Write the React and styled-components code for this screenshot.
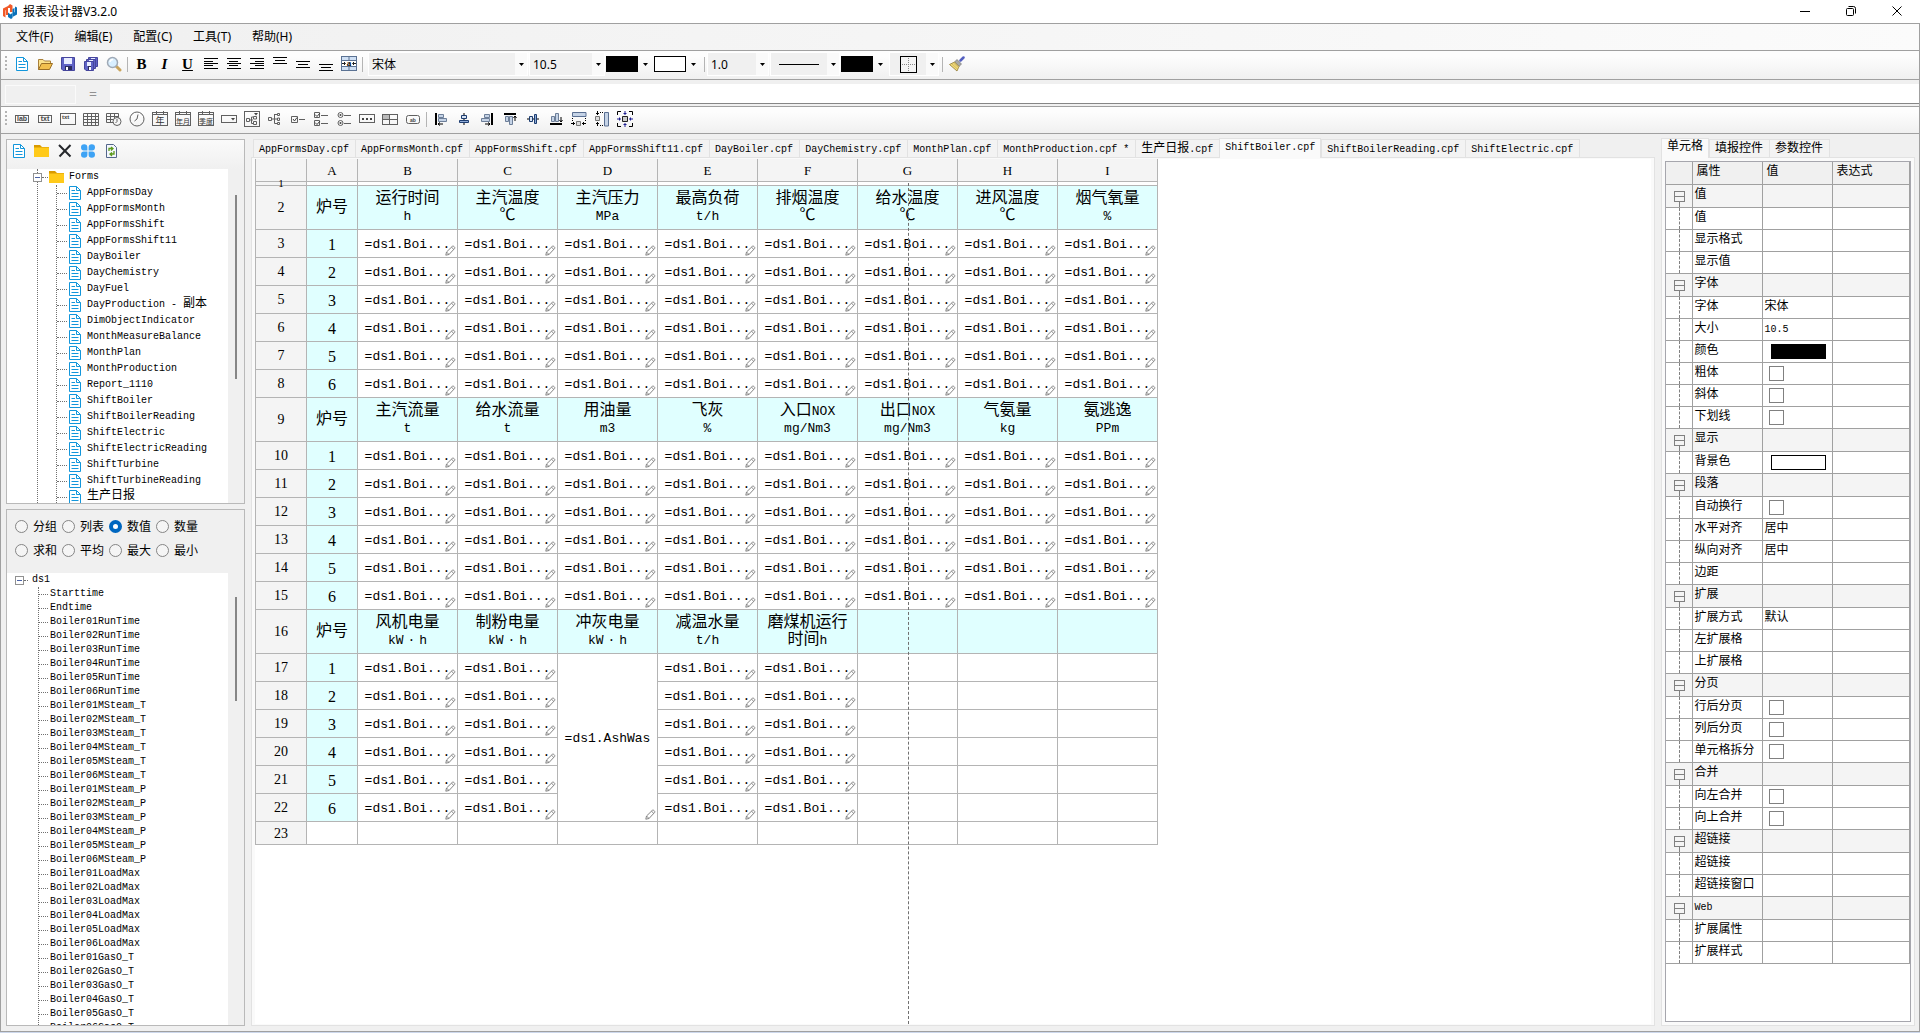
import { useState } from 'react'
import styled, { createGlobalStyle, css } from 'styled-components'

const GlobalStyle = createGlobalStyle`
  * {
    box-sizing: border-box;
  }

  body {
    margin: 0;
    background: #f0f0f0;
    color: #000;
    font-family: 'Noto Sans', 'Noto Sans CJK SC', sans-serif;
    font-size: 12px;
  }

  button, input, select {
    font: inherit;
    color: inherit;
  }

  button {
    background: none;
    border: 0;
    padding: 0;
  }
`

const mono = css`
  font-family: 'Liberation Mono', 'Noto Sans CJK SC', monospace;
  font-size: 10px;
`

const Window = styled.div`
  height: 100vh;
  display: flex;
  flex-direction: column;
  overflow: hidden;
  border-bottom: 1px solid #cdd8ec;
`

const TitleBar = styled.header`
  height: 23px;
  flex: none;
  display: flex;
  align-items: center;
  background: #fff;
  padding: 0 0 2px 2px;
`

const AppTitle = styled.h1`
  flex: 1;
  margin: 0 0 0 5px;
  font-size: 12px;
  font-weight: normal;
`

const WindowButton = styled.button`
  width: 46px;
  height: 20px;
  display: grid;
  place-items: center;
`

const Frame = styled.div`
  flex: 1;
  min-height: 0;
  display: flex;
  flex-direction: column;
  border: 1px solid #a0a0a0;
`

const MenuBar = styled.nav`
  height: 27px;
  flex: none;
  display: flex;
  align-items: center;
  gap: 21px;
  padding: 0 0 2px 15px;
  background: linear-gradient(90deg, #f0f0f0, #fbfbfb);
  border-bottom: 1px solid #a0a0a0;
`

const ToolBar = styled.div`
  height: ${(props) => props.$height}px;
  flex: none;
  display: flex;
  align-items: center;
  padding: 0 0 2px 4px;
  background: linear-gradient(#fdfdfd 20%, #f0f0f0);
  border-bottom: 1px solid #a0a0a0;
`

const Grip = styled.span`
  width: 2px;
  height: 16px;
  margin-right: 3px;
  background: repeating-linear-gradient(#b4b4b4 0 2px, transparent 2px 4px);
`

const ToolButton = styled.button`
  width: 23px;
  height: 23px;
  display: grid;
  place-items: center;
`

const Letter = styled.span`
  font: bold 15px/16px 'Liberation Serif', serif;
  font-style: ${(props) => (props.$italic ? 'italic' : 'normal')};
  text-decoration: ${(props) => (props.$underline ? 'underline' : 'none')};
`

const Separator = styled.span`
  width: 1px;
  height: 15px;
  margin: 0 ${(props) => props.$after || 2}px 0 2px;
  background: #b4b4b4;
`

const Combo = styled.span`
  width: ${(props) => props.$width}px;
  height: 24px;
  margin-right: 1px;
  display: grid;
  grid-template-columns: 1fr 12px;
  align-items: center;
  border: 1px solid #fff;
  background: linear-gradient(90deg, #f0f0f0 calc(100% - 12px), #fafafa 0);

  select {
    grid-area: 1 / 1 / 2 / 3;
    height: 22px;
    width: 100%;
    border: 0;
    padding: 0 0 0 3px;
    appearance: none;
    background: transparent;
  }

  button {
    grid-area: 1 / 1 / 2 / 2;
    display: grid;
    place-items: center;
  }

  svg.arrow {
    grid-area: 1 / 2 / 2 / 3;
    justify-self: center;
    pointer-events: none;
  }
`

const Picker = styled.button`
  width: 48px;
  height: 24px;
  display: flex;
  align-items: center;
  gap: 5px;
`

const Swatch = styled.span`
  width: ${(props) => props.$width}px;
  height: ${(props) => props.$height}px;
  border: 1px solid #000;
  background: ${(props) => props.$color};
  display: block;
`

const FormulaBar = styled.div`
  height: 27px;
  flex: none;
  display: flex;
  align-items: center;
  padding: 2px 0 0 4px;
  border-bottom: 1px solid #a0a0a0;

  span {
    width: 34px;
    padding-bottom: 2px;
    text-align: center;
    color: #909090;
    font-size: 14px;
  }
`

const NameBox = styled.input`
  width: 71px;
  height: 19px;
  background: #f0f0f0;
  border: 1px solid #fafafa;
`

const FormulaInput = styled.input`
  flex: 1;
  height: 20px;
  padding: 0 4px;
  background: #fff;
  border: 0;
  border-bottom: 1px solid #868686;
`

const Workspace = styled.main`
  flex: 1;
  min-height: 0;
  display: flex;
  gap: 6px;
  padding: 4px 4px 5px 5px;
`

const SideBar = styled.aside`
  width: 239px;
  flex: none;
  display: flex;
  flex-direction: column;
  gap: 5px;
  padding-top: 1px;
`

const Panel = styled.section`
  flex: ${(props) => props.$grow} 1 0;
  min-height: 0;
  display: flex;
  flex-direction: column;
  border: 1px solid #b9b9b9;
`

const PanelTools = styled.div`
  height: 29px;
  flex: none;
  display: flex;
  align-items: center;
  padding: 0 0 8px 0;
  background: linear-gradient(#fafafa, #f0f0f0);
`

const RadioGrid = styled.fieldset`
  height: 63px;
  flex: none;
  display: grid;
  grid-template-columns: repeat(4, 47px);
  grid-auto-rows: 24px;
  margin: 0;
  padding: 4px 0 0 8px;
  border: 0;

  label {
    display: flex;
    align-items: center;
    gap: 5px;
    white-space: nowrap;
  }

  input {
    appearance: none;
    width: 13px;
    height: 13px;
    margin: 0;
    border: 1px solid #858585;
    border-radius: 50%;
    background: #f5f5f5;
  }

  input:checked {
    border: 4px solid #0067c0;
    background: #fff;
  }
`

const TreeArea = styled.div`
  flex: 1;
  min-height: 0;
  display: flex;
  justify-content: space-between;
`

const TreeView = styled.div`
  width: 221px;
  overflow: hidden;
  background: #fff;
`

const ScrollThumb = styled.div`
  width: 2px;
  height: ${(props) => props.$size};
  margin: ${(props) => props.$top}px 7px 0 0;
  background: #868686;
`

const FormTree = styled.div`
  min-height: 100%;
  margin-left: 30px;
  border-left: 1px dotted #707070;
`

const SourceTree = styled.div`
  padding-left: 9px;
`

const TreeRow = styled.div`
  ${mono}
  height: ${(props) => props.$height}px;
  display: flex;
  align-items: center;
  white-space: nowrap;
`

const Branch = styled.ul`
  list-style: none;
  margin: 0 0 0 ${(props) => props.$indent}px;
  padding: 0;
  border-left: 1px dotted #707070;
`

const Connector = styled.span`
  width: ${(props) => props.$width}px;
  margin-right: ${(props) => props.$gap}px;
  border-top: 1px dotted #707070;
`

const Expander = styled.button`
  width: 9px;
  height: 9px;
  margin-left: ${(props) => props.$shift}px;
  border: 1px solid #919191;
  background: linear-gradient(#4b63a7, #4b63a7) center / 5px 1px no-repeat, #fff;
`

const TreeLabel = styled.span`
  margin-left: ${(props) => props.$gap}px;
  line-height: 14px;
`

// zero line height keeps the larger glyphs from moving the Latin baseline
const Cjk = styled.span`
  font-family: 'Noto Sans CJK SC', sans-serif;
  font-size: ${(props) => props.$size}px;
  line-height: 0;
`

const Dot = styled.span`
  padding: 0 4px;
`

const Document = styled.div`
  flex: ${(props) => (props.$fixed ? 'none' : '1')};
  width: ${(props) => props.$fixed || 'auto'};
  min-width: 0;
  display: flex;
  flex-direction: column;
`

const TabStrip = styled.div`
  height: 19px;
  flex: none;
  display: flex;
  align-items: flex-end;
  padding-left: ${(props) => props.$indent}px;
`

const Tab = styled.button`
  ${mono}
  height: ${(props) => (props.$active ? 20 : 18)}px;
  padding: ${(props) => (props.$active ? '0 5px 2px' : '2px 6px 0 5px')};
  margin-bottom: ${(props) => (props.$active ? -1 : 0)}px;
  position: relative;
  white-space: nowrap;
  line-height: 15px;
  background: ${(props) => (props.$active ? '#fafafa' : '#f3f3f3')};
  border: solid #e2e2e2;
  border-width: ${(props) => (props.$active ? '1px 1px 0' : '1px 0 0 1px')};

  &:last-child {
    border-right-width: 1px;
  }
`

const TabPage = styled.div`
  flex: 1;
  min-height: 0;
  display: flex;
  padding: ${(props) => props.$padding};
  background: #fafafa;
  border: 1px solid #e2e2e2;
`

const Sheet = styled.div`
  flex: 1;
  min-width: 0;
  position: relative;
  overflow: hidden;
  background: #fff;
`

const PageEdge = styled.div`
  position: absolute;
  top: 24px;
  bottom: 0;
  left: 653px;
  border-left: 1px dashed #707070;
`

const Grid = styled.table`
  table-layout: fixed;
  width: 903px;
  border-collapse: collapse;

  col {
    width: 100px;
  }

  col.head, col.index {
    width: 51px;
  }

  th, td {
    padding: 0;
    border: 1px solid #b4b4b4;
    text-align: center;
    vertical-align: middle;
    font-weight: normal;
  }

  thead th {
    height: 22px;
    padding-top: 2px;
    border-top: 0;
    background: #f4f4f4;
    font: 13px/16px 'Liberation Serif', serif;
  }
`

const GridRow = styled.tr`
  height: ${(props) => props.$height}px;
`

const RowHead = styled.th`
  background: #f4f4f4;
  font: 14px/2px 'Liberation Serif', serif;

  && {
    padding-top: ${(props) => (props.$thin ? 0 : 2)}px;
  }

  small {
    font-size: 11px;
  }
`

const Caption = styled.td`
  background: #e0ffff;
  font: 13px/17px 'Liberation Mono', 'Noto Sans CJK SC', monospace;

  && {
    padding-top: 2px;
  }
`

const CaptionLine = styled.div`
  height: 17px;
`

const Index = styled.td`
  background: #e0ffff;
  font: 16px/20px 'Liberation Serif', serif;

  && {
    padding-top: 4px;
  }
`

const Formula = styled.td`
  position: relative;
  font: 13px/20px 'Liberation Mono', monospace;

  && {
    padding-top: 4px;
  }
`

const Corner = styled.svg`
  position: absolute;
  right: 1px;
  bottom: 1px;
`

const Properties = styled.div`
  flex: 1;
  min-width: 0;
  overflow: hidden;
  background: #fff;
  border: 1px solid #a6a6ad;
`

const PropertyTable = styled.table`
  ${mono}
  table-layout: fixed;
  width: 100%;
  border-collapse: collapse;

  th, td {
    height: 22px;
    padding: 1px 0 0 2px;
    border: solid #a0a0a0;
    border-width: 0 1px 1px 0;
    line-height: 16px;
    text-align: left;
    font-weight: normal;
    white-space: nowrap;
  }

  th {
    padding-left: 4px;
    background: #f0f0f0;
  }
`

const PropertyRow = styled.tr`
  background: ${(props) => (props.$group ? '#f4f4f4' : '#fff')};

  && td {
    height: ${(props) => (props.$group ? 23 : 22)}px;
  }
`

const Gutter = styled.td`
  position: relative;

  &::before {
    content: '';
    position: absolute;
    left: 13px;
    top: ${(props) => (props.$group ? 17 : 0)}px;
    bottom: 0;
    border-left: 1px dashed #808080;
  }
`

const GroupToggle = styled.button`
  width: 11px;
  height: 11px;
  margin-left: 6px;
  display: block;
  border: 1px solid #808080;
  background: linear-gradient(#808080, #808080) center / 100% 1px no-repeat;
`

const PropertyCheck = styled.input`
  appearance: none;
  display: block;
  width: 15px;
  height: 15px;
  margin: 0 0 0 4px;
  border: 1px solid #808080;
  background: #fff;
`

const ColorButton = styled.button`
  display: block;
  margin-left: 6px;
`

const Mixed = ({ text, size = 12 }) =>
  text
    .split(/([\u2103\u4e00-\u9fff]+|\u00b7)/)
    .filter(Boolean)
    .map((part, i) => {
      if (part === '·') return <Dot key={i}>{part}</Dot>
      if (/[\u2103\u4e00-\u9fff]/.test(part)) return <Cjk key={i} $size={size}>{part}</Cjk>
      return part
    })

const Svg = ({ size = 16, children }) => (
  <svg width={size} height={size} viewBox={`0 0 ${size} ${size}`} fill="none" aria-hidden="true">
    {children}
  </svg>
)

const Arrow = () => (
  <svg className="arrow" width="5" height="3" viewBox="0 0 5 3" aria-hidden="true">
    <path d="M0 0h5L2.5 3z" fill="#000" />
  </svg>
)

const DocIcon = () => (
  <Svg>
    <path d="M2.5 1.500H9.500L13.500 5.500V14.500H2.500Z" fill="#fff" stroke="#1296db" />
    <path d="M9.500 1.500V5.500H13.500M4.500 5.500H8M4.500 8.500H11.500M4.500 11.500H11.500" stroke="#1296db" />
  </Svg>
)

const FolderIcon = () => (
  <Svg>
    <path d="M0 2h6l2 2h7v3H0z" fill="#d99a00" />
    <path d="M0 4.500h15V14H0z" fill="#ffca1a" />
  </Svg>
)

const OpenIcon = () => (
  <Svg>
    <path d="M1.500 13.500V3.500H6L7.500 5H13.500V8" fill="#fbe28c" stroke="#a9803a" />
    <path d="M1.500 13.500L4.500 7.500H15.500L12.500 13.500Z" fill="#f2c04e" stroke="#9b6f25" />
  </Svg>
)

const SaveShape = ({ x = 0, y = 0, s = 14 }) => (
  <g transform={`translate(${x} ${y})`}>
    <path d={`M.5 .5H${s - 0.5}V${s - 0.5}H2L.5 ${s - 2}Z`} fill="#5f63c6" stroke="#45459c" />
    <path d={`M3 1H${s - 3}V${s / 2}H3Z`} fill="#e8ecff" />
    <path d={`M4 ${s - 5}H${s - 3}V${s - 1}H4Z`} fill="#2a2a5c" />
    <path d={`M5 ${s - 4}H7V${s - 1}H5Z`} fill="#fff" />
  </g>
)

const SaveIcon = () => (
  <Svg>
    <SaveShape x={1} y={1} />
  </Svg>
)

const SaveAllIcon = () => (
  <Svg>
    <SaveShape x={5} y={1} s={10} />
    <SaveShape x={3} y={3} s={10} />
    <SaveShape x={1} y={5} s={10} />
  </Svg>
)

const SearchIcon = () => (
  <Svg>
    <path d="M10.500 10.500L14 14" stroke="#c9a45c" strokeWidth="3" strokeLinecap="round" />
    <circle cx="6.500" cy="6.500" r="5" fill="#d9efff" stroke="#a0aab6" strokeWidth="1.500" />
    <path d="M4 6A3 3 0 0 1 7 3.500" stroke="#fff" strokeWidth="1.500" />
  </Svg>
)

// rows are [x, y, width]
const LinesIcon = ({ rows }) => (
  <Svg>
    {rows.map(([x, y, w]) => (
      <rect key={y} x={x} y={y} width={w} height="1" fill="#000" />
    ))}
  </Svg>
)

const MergeIcon = () => (
  <Svg>
    <rect x=".5" y=".5" width="15" height="14" fill="#cfe0f5" stroke="#5b7293" />
    <path d="M8 1V4M8 11V14M1 4.500H15M1 10.500H15" stroke="#5b7293" />
    <path d="M1 5H15V10H1Z" fill="#fff" />
    <path d="M1 7.500H4M3 6L4.500 7.500L3 9M15 7.500H12M13 6L11.500 7.500L13 9" stroke="#222" />
    <text x="8" y="10" textAnchor="middle" fontFamily="Liberation Serif" fontWeight="bold" fontSize="9" fill="#000">a</text>
  </Svg>
)

const BordersIcon = () => (
  <Svg size={17}>
    <rect x=".5" y=".5" width="16" height="16" fill="#f4f4f4" stroke="#000" />
    <path d="M8.500 2V15M2 8.500H15" stroke="#888" strokeDasharray="1 1" />
  </Svg>
)

const BrushIcon = () => (
  <Svg>
    <path d="M11.500 4.500L14.500 1.500" stroke="#5560c0" strokeWidth="2.500" strokeLinecap="round" />
    <path d="M8 3.500L12.500 8L10 10.500L5.500 6Z" fill="#a8a8a8" stroke="#666" strokeWidth=".6" />
    <path d="M5.500 6L10 10.500L8 15L.5 8.500Z" fill="#f2dc78" stroke="#8f7a35" strokeWidth=".8" />
    <path d="M3 8L8.500 13M4.500 7L9.500 11.500" stroke="#c9b060" strokeWidth=".8" />
  </Svg>
)

const LabelIcon = ({ text }) => (
  <Svg>
    <rect x="1.500" y="4.500" width="13" height="7" stroke="#606060" />
    <text x="8" y="10" textAnchor="middle" fontFamily="Liberation Sans" fontWeight="bold" fontSize="7" fill="#444">{text}</text>
  </Svg>
)

const TextAreaIcon = () => (
  <Svg>
    <rect x=".5" y="2.500" width="15" height="11" stroke="#606060" />
    <text x="2" y="8" fontFamily="Liberation Sans" fontWeight="bold" fontSize="6" fill="#444">txt</text>
  </Svg>
)

const TableIcon = () => (
  <Svg>
    <path d="M.5 2.500H15.500V14.500H.5ZM4.500 2V14M8.500 2V14M12.500 2V14M0 5.500H15M0 8.500H15M0 11.500H15" stroke="#606060" />
  </Svg>
)

const TableClockIcon = () => (
  <Svg>
    <path d="M.5 2.500H12.500V11.500H.5ZM4.500 2V12M8.500 2V12M0 5.500H13M0 8.500H13" stroke="#606060" />
    <circle cx="11" cy="10.500" r="4" fill="#f8f8f8" stroke="#606060" />
    <path d="M11 8V10.500L9.500 12" stroke="#606060" />
  </Svg>
)

const ClockIcon = () => (
  <Svg>
    <circle cx="8" cy="8" r="7" stroke="#606060" />
    <path d="M9 3.500L8 8L5.500 10" stroke="#606060" />
  </Svg>
)

const CalendarIcon = ({ text }) => (
  <Svg>
    <rect x=".5" y="1.500" width="15" height="13" stroke="#606060" />
    <path d="M1 3.500H15M4.500 0V3M11.500 0V3" stroke="#606060" />
    <text x="8" y="13" textAnchor="middle" fontFamily="Noto Sans CJK SC" fontSize={text.length > 1 ? 7 : 9} fill="#333">{text}</text>
  </Svg>
)

const DropIcon = () => (
  <Svg>
    <rect x=".5" y="4.500" width="15" height="7" stroke="#606060" />
    <path d="M10 7H14L12 9.500Z" fill="#444" />
  </Svg>
)

const TreeIcon = () => (
  <Svg>
    <path d="M1.500 6.500H4.500V9.500H1.500ZM4.500 8H10M7.500 3V12.500H10M7.500 3.500H10M10.500 2.500H12.500V4.500H10.500ZM10.500 7H12.500V9.500H10.500ZM10.500 11.500H12.500V13.500H10.500Z" stroke="#606060" />
  </Svg>
)

const TreeBoxIcon = () => (
  <Svg>
    <rect x=".5" y=".5" width="15" height="15" stroke="#606060" />
    <path d="M10 2H14L12 4.500Z" fill="#444" />
    <path d="M2.500 7.500H5.500V10.500H2.500ZM5 9H9M7.500 6V12.500H9M7.500 6H9M9.500 5.500H12.500V8H9.500ZM9.500 10.500H12.500V13.500H9.500Z" stroke="#606060" />
  </Svg>
)

const CheckIcon = () => (
  <Svg>
    <path d="M1.500 5.500H7.500V11.500H1.500ZM9 8.500H15" stroke="#606060" />
    <path d="M3 8L4.500 10L7 6.500" stroke="#444" />
  </Svg>
)

const CheckListIcon = () => (
  <Svg>
    <path d="M1.500 1.500H6.500V6.500H1.500ZM1.500 9.500H6.500V14.500H1.500ZM8 4.500H15M8 12.500H15" stroke="#606060" />
    <path d="M2 3.500L4 5.500L7 2M2 11.500L4 13.500L7 10" stroke="#444" />
  </Svg>
)

const RadioListIcon = () => (
  <Svg>
    <circle cx="4.500" cy="4" r="2.500" stroke="#606060" />
    <circle cx="4.500" cy="12" r="2.500" stroke="#606060" />
    <circle cx="4.500" cy="4" r="1" fill="#444" />
    <circle cx="4.500" cy="12" r="1" fill="#444" />
    <path d="M8 4.500H15M8 12.500H15" stroke="#606060" />
  </Svg>
)

const DotsIcon = () => (
  <Svg>
    <rect x=".5" y="3.500" width="15" height="8" stroke="#606060" />
    <path d="M3 7h2v2H3zM7 7h2v2H7zM11 7h2v2h-2z" fill="#444" />
  </Svg>
)

const PanelIcon = () => (
  <Svg>
    <rect x=".5" y="3.500" width="15" height="10" stroke="#606060" />
    <path d="M1 4H7V8H1Z" fill="#bbb" />
    <path d="M7.500 4V13M1 8.500H15" stroke="#606060" />
  </Svg>
)

const ButtonIcon = () => (
  <Svg>
    <rect x="1.500" y="4.500" width="13" height="8" rx="2" stroke="#606060" />
    <text x="8" y="10.500" textAnchor="middle" fontFamily="Liberation Sans" fontWeight="bold" fontSize="5" fill="#444">ab</text>
  </Svg>
)

const AlignLeftIcon = () => (
  <Svg>
    <path d="M2 2h2v12H2z" fill="#000" />
    <path d="M5.500 3.500H10.500V6.500H5.500ZM5.500 7.500H13.500V10.500H5.500Z" fill="#c5d3e6" stroke="#6d7f99" />
    <path d="M5 13H10M5 13L7 11.500M5 13L7 14.500" stroke="#000" />
  </Svg>
)

const AlignMidIcon = () => (
  <Svg>
    <path d="M8 2V14" stroke="#000" />
    <path d="M5.500 4.500H10.500V7.500H5.500Z" fill="#d8e3f3" stroke="#1d3d70" />
    <path d="M3.500 9.500H12.500V11.500H3.500Z" fill="#8fabd6" stroke="#1d3d70" />
  </Svg>
)

const Mirrored = styled.span`
  display: grid;
  transform: ${(props) => props.$by};
`

const SameWidthIcon = () => (
  <Svg>
    <path d="M1.500 1.500H15V5.500H1.500Z" fill="#c5d3e6" stroke="#5a6f92" />
    <path d="M1.500 7V11M14.500 7V11" stroke="#000" strokeDasharray="1 1" />
    <path d="M5.500 10.500H9.500V14.500H5.500Z" fill="#ddd" stroke="#777" />
    <path d="M0 12.500H4M2.500 11V14M11 12.500H15M12.500 11V14" stroke="#000" />
  </Svg>
)

const SameSizeIcon = () => (
  <Svg>
    <path d="M.5 4V.5H4M12 .5H15.500V4M15.500 12V15.500H12M4 15.500H.5V12" stroke="#000" />
    <path d="M5.500 5.500H10.500V10.500H5.500Z" fill="#ccc" stroke="#222" />
    <path d="M8 0V4M8 12V16M0 8H4M12 8H16M6.500 2.500H9.500M6.500 13.500H9.500M2.500 6.500V9.500M13.500 6.500V9.500" stroke="#1c1c90" />
  </Svg>
)

const CrossIcon = () => (
  <Svg>
    <path d="M2 2L13.500 13.500M13.500 2L2.500 13.500" stroke="#26282c" strokeWidth="2" />
  </Svg>
)

const CloverIcon = () => (
  <Svg>
    <path d="M1 4.500a3.200 3.200 0 1 1 6.400 0V7.400H4.200A3 3 0 0 1 1 4.500zM15 4.500a3.200 3.200 0 1 0-6.400 0V7.400h3.200A3 3 0 0 0 15 4.500zM1 11.500a3.200 3.200 0 1 0 6.400 0V8.600H4.200A3 3 0 0 0 1 11.500zM15 11.500a3.200 3.200 0 1 1-6.400 0V8.600h3.200A3 3 0 0 1 15 11.500z" fill="#3ea3f5" />
  </Svg>
)

const RefreshIcon = () => (
  <Svg>
    <path d="M3.500 1.500H10.500L13.500 4.500V14.500H3.500Z" fill="#f4f7fd" stroke="#54678c" />
    <path d="M6 8V5.500H9.500M8 4L10 5.500L8 7.500M11 8V11H7.500M9 9.500L7 11L9 13" stroke="#5c9a1c" strokeWidth="1.300" />
  </Svg>
)

const Logo = () => (
  <Svg>
    <path d="M1 13V5.500L6 3V12H4V7L3.500 7.500V14.500Z" fill="#f15a29" />
    <path d="M6 3L8 1L10.500 2.500V9H8V5H6Z" fill="#f15a29" />
    <path d="M15 4.500V11.500L10.500 14V6L12.500 5V9.500L13 9V3.500Z" fill="#0b72b9" />
    <path d="M10.500 10V15L9 16L6 14V9.500L8 11V11.500Z" fill="#0b72b9" />
  </Svg>
)

const Pencil = () => (
  <Corner width="11" height="11" viewBox="0 0 11 11" fill="none" aria-hidden="true">
    <path d="M.8 10.200L1.500 7L7.500 1.200C8.300 .5 10.500 2.500 9.700 3.400L4 9.500ZM1.500 7L4 9.500M6.500 2.200L8.800 4.400" stroke="#858585" />
  </Corner>
)

const fileTools = [
  ['新建', <DocIcon />],
  ['打开', <OpenIcon />],
  ['保存', <SaveIcon />],
  ['全部保存', <SaveAllIcon />],
  ['预览', <SearchIcon />],
]

const lineTops = [2, 5, 7, 9, 12]
const alignRows = (x) => lineTops.map((y, i) => (i % 2 ? [x, y, 9] : [1, y, 14]))

const formatTools = [
  ['粗体', <Letter>B</Letter>],
  ['斜体', <Letter $italic>I</Letter>],
  ['下划线', <Letter $underline>U</Letter>],
  ['左对齐', <LinesIcon rows={alignRows(1)} />],
  ['水平居中', <LinesIcon rows={alignRows(3)} />],
  ['右对齐', <LinesIcon rows={alignRows(6)} />],
  ['顶端对齐', <LinesIcon rows={[[1, 1, 14], [3, 4, 10], [1, 7, 14]]} />],
  ['垂直居中', <LinesIcon rows={[[1, 5, 14], [3, 8, 10], [1, 11, 14]]} />],
  ['底端对齐', <LinesIcon rows={[[1, 8, 14], [3, 11, 10], [1, 14, 14]]} />],
  ['合并', <MergeIcon />],
]

const controlTools = [
  ['标签', <LabelIcon text="lab" />],
  ['文本', <LabelIcon text="txt" />],
  ['多行文本', <TextAreaIcon />],
  ['表格', <TableIcon />],
  ['日期时间', <TableClockIcon />],
  ['时间', <ClockIcon />],
  ['年', <CalendarIcon text="年" />],
  ['年月', <CalendarIcon text="年月" />],
  ['季度', <CalendarIcon text="季度" />],
  ['下拉框', <DropIcon />],
  ['下拉树', <TreeBoxIcon />],
  ['树', <TreeIcon />],
  ['复选框', <CheckIcon />],
  ['复选列表', <CheckListIcon />],
  ['单选列表', <RadioListIcon />],
  ['更多', <DotsIcon />],
  ['面板', <PanelIcon />],
  ['按钮', <ButtonIcon />],
]

const arrangeTools = [
  ['左边对齐', <AlignLeftIcon />],
  ['中间对齐', <AlignMidIcon />],
  ['右边对齐', <Mirrored $by="scaleX(-1)"><AlignLeftIcon /></Mirrored>],
  ['上边对齐', <Mirrored $by="rotate(90deg) scaleY(-1)"><AlignLeftIcon /></Mirrored>],
  ['居中对齐', <Mirrored $by="rotate(-90deg)"><AlignMidIcon /></Mirrored>],
  ['下边对齐', <Mirrored $by="rotate(-90deg)"><AlignLeftIcon /></Mirrored>],
  ['等宽', <SameWidthIcon />],
  ['等高', <Mirrored $by="rotate(90deg)"><SameWidthIcon /></Mirrored>],
  ['等大小', <SameSizeIcon />],
]

const panelTools = [
  ['新建报表', <DocIcon />],
  ['新建目录', <FolderIcon />],
  ['删除', <CrossIcon />],
  ['数据集', <CloverIcon />],
  ['刷新', <RefreshIcon />],
]

const Tools = ({ items }) =>
  items.map(([label, icon]) => (
    <ToolButton key={label} aria-label={label}>
      {icon}
    </ToolButton>
  ))

const forms = [
  'AppFormsDay', 'AppFormsMonth', 'AppFormsShift', 'AppFormsShift11', 'DayBoiler',
  'DayChemistry', 'DayFuel', 'DayProduction - 副本', 'DimObjectIndicator',
  'MonthMeasureBalance', 'MonthPlan', 'MonthProduction', 'Report_1110', 'ShiftBoiler',
  'ShiftBoilerReading', 'ShiftElectric', 'ShiftElectricReading', 'ShiftTurbine',
  'ShiftTurbineReading', '生产日报',
]

const fields = [
  'Starttime',
  'Endtime',
  ...['RunTime', 'MSteam_T', 'MSteam_P', 'LoadMax', 'GasO_T'].flatMap((name) =>
    [1, 2, 3, 4, 5, 6].map((n) => `Boiler0${n}${name}`)
  ),
]

const documents = [
  'AppFormsDay.cpf', 'AppFormsMonth.cpf', 'AppFormsShift.cpf', 'AppFormsShift11.cpf',
  'DayBoiler.cpf', 'DayChemistry.cpf', 'MonthPlan.cpf', 'MonthProduction.cpf *',
  '生产日报.cpf', 'ShiftBoiler.cpf', 'ShiftBoilerReading.cpf', 'ShiftElectric.cpf',
]

const blocks = [
  {
    row: 2,
    captions: [
      ['运行时间', 'h'], ['主汽温度', '℃'], ['主汽压力', 'MPa'], ['最高负荷', 't/h'],
      ['排烟温度', '℃'], ['给水温度', '℃'], ['进风温度', '℃'], ['烟气氧量', '%'],
    ],
  },
  {
    row: 9,
    captions: [
      ['主汽流量', 't'], ['给水流量', 't'], ['用油量', 'm3'], ['飞灰', '%'],
      ['入口NOX', 'mg/Nm3'], ['出口NOX', 'mg/Nm3'], ['气氨量', 'kg'], ['氨逃逸', 'PPm'],
    ],
  },
  {
    row: 16,
    merged: 2,
    captions: [
      ['风机电量', 'kW·h'], ['制粉电量', 'kW·h'], ['冲灰电量', 'kW·h'], ['减温水量', 't/h'],
      ['磨煤机运行', '时间h'], null, null, null,
    ],
  },
]

const properties = [
  ['值', [['值'], ['显示格式'], ['显示值']]],
  ['字体', [['字体', '宋体'], ['大小', '10.5'], ['颜色', 'color', '#000'], ['粗体', 'check'], ['斜体', 'check'], ['下划线', 'check']]],
  ['显示', [['背景色', 'color', '#fff']]],
  ['段落', [['自动换行', 'check'], ['水平对齐', '居中'], ['纵向对齐', '居中'], ['边距']]],
  ['扩展', [['扩展方式', '默认'], ['左扩展格'], ['上扩展格']]],
  ['分页', [['行后分页', 'check'], ['列后分页', 'check'], ['单元格拆分', 'check']]],
  ['合并', [['向左合并', 'check'], ['向上合并', 'check']]],
  ['超链接', [['超链接'], ['超链接窗口']]],
  ['Web', [['扩展属性'], ['扩展样式']]],
]

const Block = ({ row, captions, merged }) => (
  <>
    <GridRow $height={44}>
      <RowHead>{row}</RowHead>
      <Caption><Mixed text="炉号" size={16} /></Caption>
      {captions.map((lines, i) => (
        <Caption key={i}>
          {lines && lines.map((line) => (
            <CaptionLine key={line}><Mixed text={line} size={16} /></CaptionLine>
          ))}
        </Caption>
      ))}
    </GridRow>
    {[1, 2, 3, 4, 5, 6].map((n) => (
      <GridRow key={n} $height={28}>
        <RowHead>{row + n}</RowHead>
        <Index>{n}</Index>
        {captions.map((lines, i) => {
          if (i === merged) {
            return n === 1 ? <Formula key={i} rowSpan={6}>=ds1.AshWas<Pencil /></Formula> : null
          }
          return lines ? <Formula key={i}>=ds1.Boi...<Pencil /></Formula> : <td key={i} />
        })}
      </GridRow>
    ))}
  </>
)

const ReportGrid = () => (
  <Grid>
    <colgroup>
      <col className="head" />
      <col className="index" />
      {'BCDEFGHI'.split('').map((c) => <col key={c} />)}
    </colgroup>
    <thead>
      <tr>
        <th />
        {'ABCDEFGHI'.split('').map((c) => <th key={c}>{c}</th>)}
      </tr>
    </thead>
    <tbody>
      <GridRow $height={4}>
        <RowHead $thin><small>1</small></RowHead>
        {'ABCDEFGHI'.split('').map((c) => <td key={c} />)}
      </GridRow>
      {blocks.map((block) => <Block key={block.row} {...block} />)}
      <GridRow $height={23}>
        <RowHead>23</RowHead>
        {'ABCDEFGHI'.split('').map((c) => <td key={c} />)}
      </GridRow>
    </tbody>
  </Grid>
)

const PropertyValue = ({ name, value, color }) => {
  if (value === 'check') return <PropertyCheck type="checkbox" aria-label={name} />
  if (value === 'color') {
    return (
      <ColorButton aria-label={name}>
        <Swatch $width={55} $height={15} $color={color} />
      </ColorButton>
    )
  }
  return value ? <Mixed text={value} /> : null
}

const PropertyGroup = ({ title, rows }) => (
  <tbody>
    <PropertyRow $group>
      <Gutter $group><GroupToggle aria-label={title} /></Gutter>
      <td><Mixed text={title} /></td>
      <td />
      <td />
    </PropertyRow>
    {rows.map(([name, value, color]) => (
      <PropertyRow key={name}>
        <Gutter />
        <td><Mixed text={name} /></td>
        <td><PropertyValue name={name} value={value} color={color} /></td>
        <td />
      </PropertyRow>
    ))}
  </tbody>
)

const App = () => {
  const [mode, setMode] = useState('数值')
  const [active, setActive] = useState('ShiftBoiler.cpf')

  return (
    <Window>
      <GlobalStyle />
      <TitleBar>
        <Logo />
        <AppTitle>报表设计器V3.2.0</AppTitle>
        <WindowButton aria-label="最小化">
          <Svg><path d="M3 8.500H13" stroke="#000" /></Svg>
        </WindowButton>
        <WindowButton aria-label="还原">
          <Svg>
            <rect x="3.500" y="5.500" width="7" height="7" rx="1" stroke="#000" />
            <path d="M5.500 3.500H10.500A2 2 0 0 1 12.500 5.500V10.500" stroke="#000" />
          </Svg>
        </WindowButton>
        <WindowButton aria-label="关闭">
          <Svg><path d="M3.500 3.500L12.500 12.500M12.500 3.500L3.500 12.500" stroke="#000" /></Svg>
        </WindowButton>
      </TitleBar>
      <Frame>
        <MenuBar>
          {['文件(F)', '编辑(E)', '配置(C)', '工具(T)', '帮助(H)'].map((item) => (
            <button key={item}>{item}</button>
          ))}
        </MenuBar>
        <ToolBar $height={29}>
          <Grip />
          <Tools items={fileTools} />
          <Separator />
          <Tools items={formatTools} />
          <Separator $after={5} />
          <Combo $width={160}>
            <select aria-label="字体"><option>宋体</option></select>
            <Arrow />
          </Combo>
          <Combo $width={76}>
            <select aria-label="字号"><option>10.5</option></select>
            <Arrow />
          </Combo>
          <Picker aria-label="字体颜色"><Swatch $width={32} $height={16} $color="#000" /><Arrow /></Picker>
          <Picker aria-label="背景颜色"><Swatch $width={32} $height={16} $color="#fff" /><Arrow /></Picker>
          <Separator />
          <Combo $width={62}>
            <select aria-label="线宽"><option>1.0</option></select>
            <Arrow />
          </Combo>
          <Combo $width={70}>
            <button aria-label="线型">
              <svg width="40" height="1" aria-hidden="true"><rect width="40" height="1" /></svg>
            </button>
            <Arrow />
          </Combo>
          <Picker aria-label="线条颜色"><Swatch $width={32} $height={16} $color="#000" /><Arrow /></Picker>
          <Combo $width={50}>
            <button aria-label="边框"><BordersIcon /></button>
            <Arrow />
          </Combo>
          <Separator />
          <ToolButton aria-label="格式刷"><BrushIcon /></ToolButton>
        </ToolBar>
        <FormulaBar>
          <NameBox aria-label="单元格名称" />
          <span>=</span>
          <FormulaInput aria-label="公式" />
        </FormulaBar>
        <ToolBar $height={27}>
          <Grip />
          <Tools items={controlTools} />
          <Separator />
          <Tools items={arrangeTools} />
        </ToolBar>
        <Workspace>
          <SideBar>
            <Panel $grow={12}>
              <PanelTools>
                <Tools items={panelTools} />
              </PanelTools>
              <TreeArea>
                <TreeView>
                  <FormTree>
                    <TreeRow $height={16}>
                      <Expander $shift={-5} aria-label="Forms" />
                      <Connector $width={6} $gap={1} />
                      <FolderIcon />
                      <TreeLabel $gap={4}>Forms</TreeLabel>
                    </TreeRow>
                    <Branch $indent={18}>
                      {forms.map((name) => (
                        <TreeRow as="li" key={name} $height={16}>
                          <Connector $width={10} $gap={0} />
                          <DocIcon />
                          <TreeLabel $gap={4}><Mixed text={name} /></TreeLabel>
                        </TreeRow>
                      ))}
                    </Branch>
                  </FormTree>
                </TreeView>
                <ScrollThumb $top={26} $size="55%" />
              </TreeArea>
            </Panel>
            <Panel $grow={17}>
              <RadioGrid>
                {['分组', '列表', '数值', '数量', '求和', '平均', '最大', '最小'].map((name) => (
                  <label key={name}>
                    <input type="radio" name="mode" checked={mode === name} onChange={() => setMode(name)} />
                    {name}
                  </label>
                ))}
              </RadioGrid>
              <TreeArea>
                <TreeView>
                  <SourceTree>
                    <TreeRow $height={14}>
                      <Expander $shift={-1} aria-label="ds1" />
                      <Connector $width={4} $gap={0} />
                      <TreeLabel $gap={4}>ds1</TreeLabel>
                    </TreeRow>
                    <Branch $indent={22}>
                      {fields.map((name) => (
                        <TreeRow as="li" key={name} $height={14}>
                          <Connector $width={9} $gap={0} />
                          <TreeLabel $gap={2}>{name}</TreeLabel>
                        </TreeRow>
                      ))}
                    </Branch>
                  </SourceTree>
                </TreeView>
                <ScrollThumb $top={24} $size="23%" />
              </TreeArea>
            </Panel>
          </SideBar>
          <Document>
            <TabStrip $indent={2}>
              {documents.map((name) => (
                <Tab key={name} $active={name === active} onClick={() => setActive(name)}>
                  <Mixed text={name} />
                </Tab>
              ))}
            </TabStrip>
            <TabPage $padding="1px 3px">
              <Sheet>
                <ReportGrid />
                <PageEdge />
              </Sheet>
            </TabPage>
          </Document>
          <Document $fixed="254px">
            <TabStrip $indent={0}>
              <Tab $active><Mixed text="单元格" /></Tab>
              <Tab><Mixed text="填报控件" /></Tab>
              <Tab><Mixed text="参数控件" /></Tab>
            </TabStrip>
            <TabPage $padding="3px">
              <Properties>
                <PropertyTable>
                  <colgroup>
                    <col width="26" />
                    <col width="70" />
                    <col width="70" />
                    <col />
                  </colgroup>
                  <thead>
                    <tr>
                      <th />
                      <th><Mixed text="属性" /></th>
                      <th><Mixed text="值" /></th>
                      <th><Mixed text="表达式" /></th>
                    </tr>
                  </thead>
                  {properties.map(([title, rows]) => (
                    <PropertyGroup key={title} title={title} rows={rows} />
                  ))}
                </PropertyTable>
              </Properties>
            </TabPage>
          </Document>
        </Workspace>
      </Frame>
    </Window>
  )
}

export default App
